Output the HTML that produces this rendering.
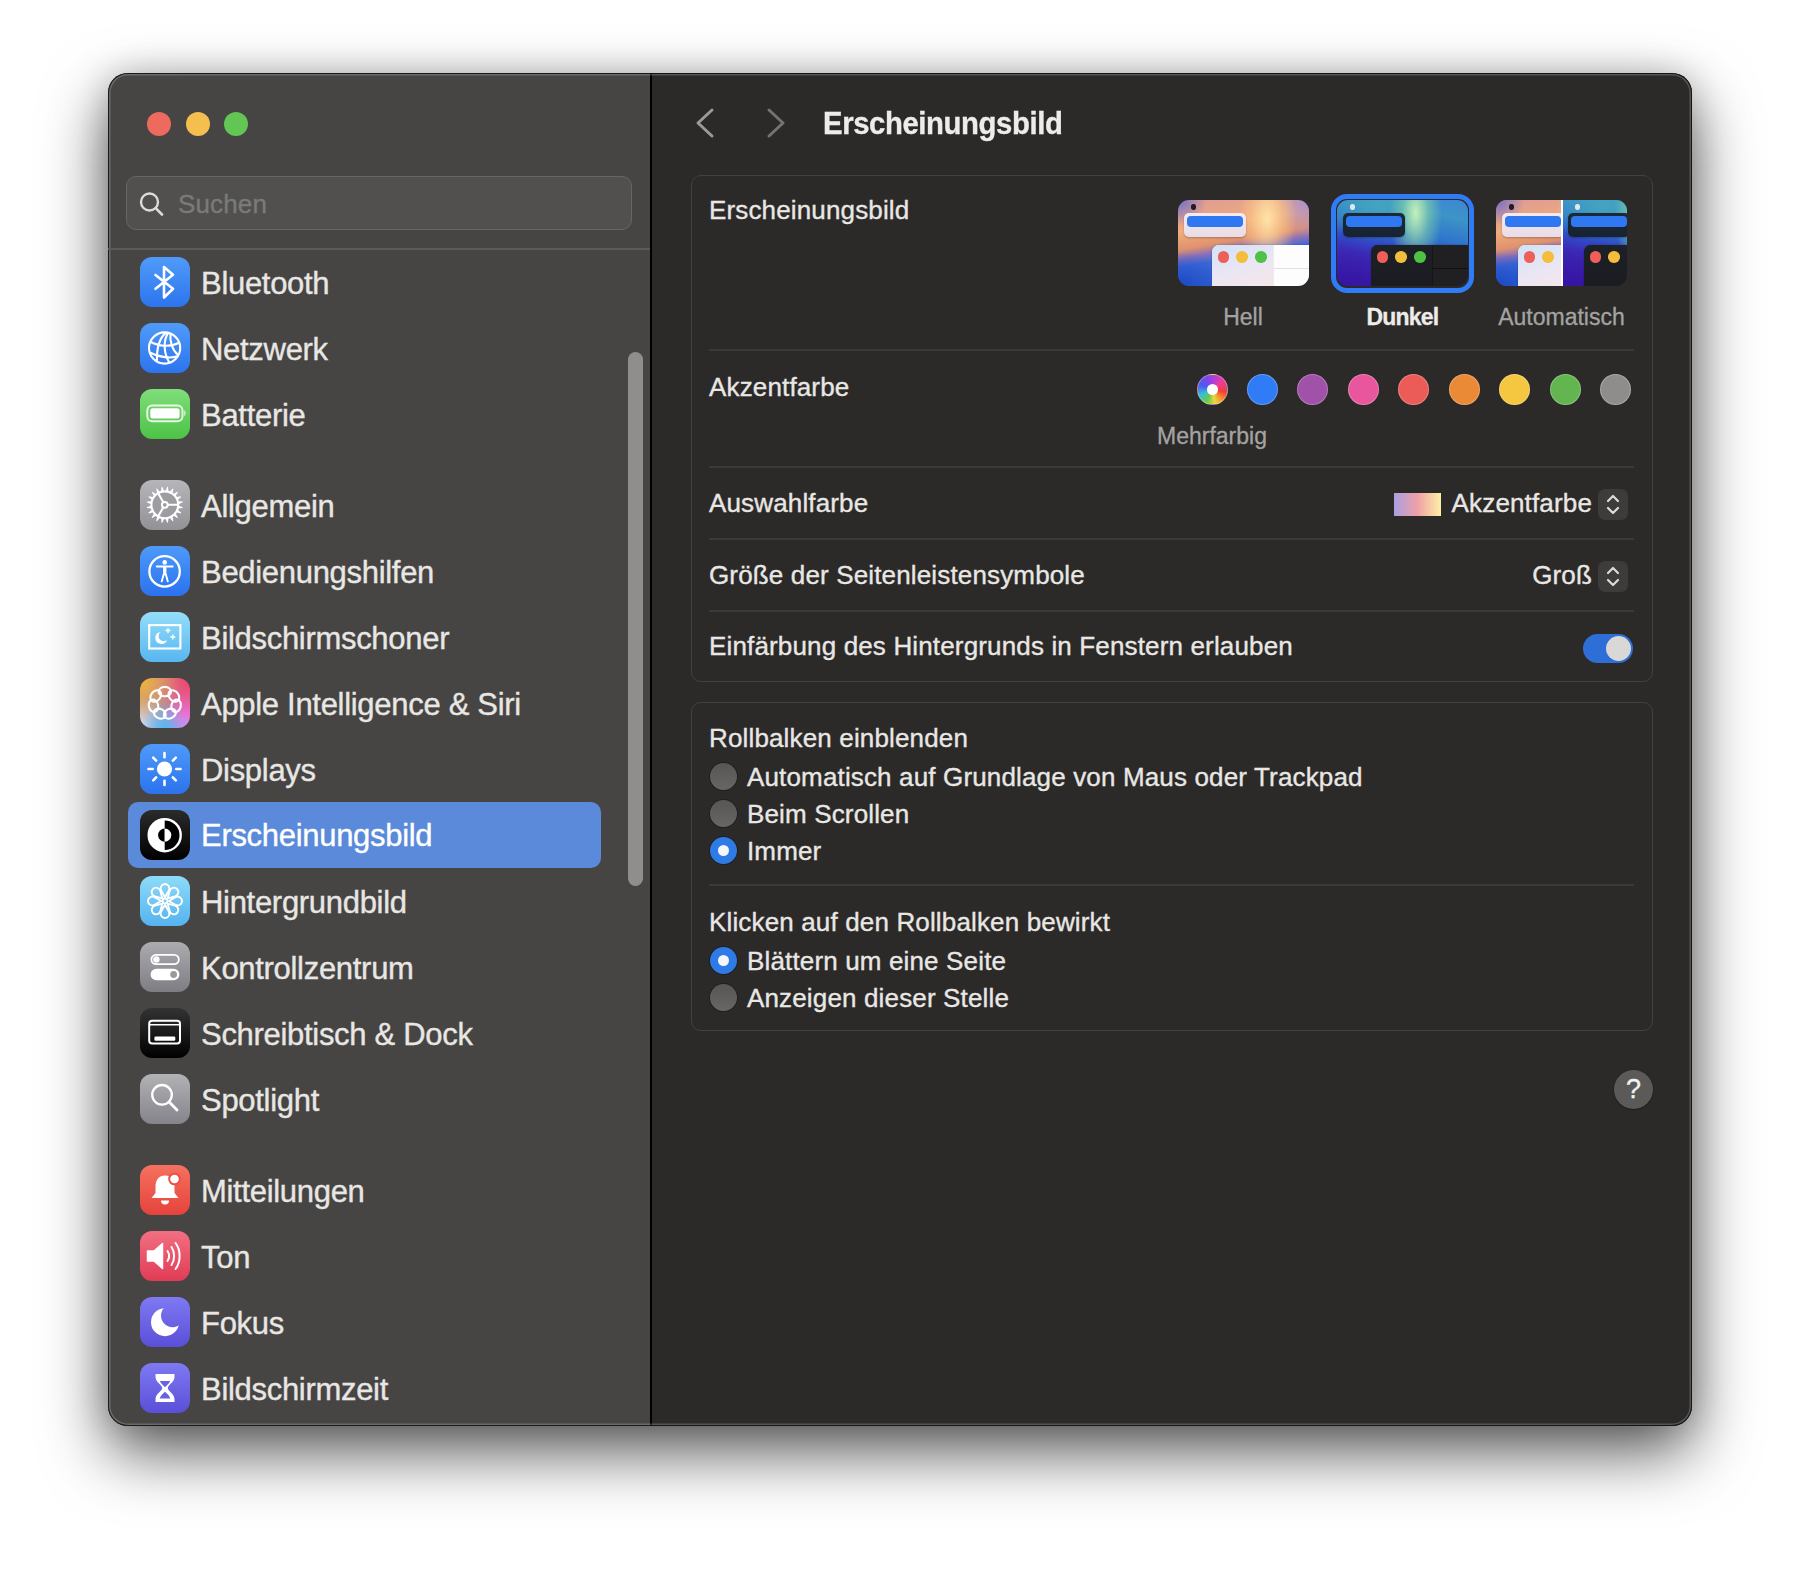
<!DOCTYPE html>
<html><head><meta charset="utf-8">
<style>
html,body{margin:0;padding:0;background:#fff;width:1800px;height:1569px;overflow:hidden;font-family:"Liberation Sans",sans-serif;}
.abs{position:absolute;}
#win{position:absolute;left:108px;top:73px;width:1584px;height:1353px;border-radius:20px;overflow:hidden;
 box-shadow:0 26px 64px rgba(0,0,0,0.66),0 0 32px rgba(0,0,0,0.16);background:#2b2a29;}
#side{position:absolute;left:0;top:0;width:542px;height:1353px;background:#464544;}
#divider{position:absolute;left:542px;top:0;width:2px;height:1353px;background:#000;}
#content{position:absolute;left:544px;top:0;width:1040px;height:1353px;background:#2b2a29;}
#winborder{position:absolute;left:108px;top:73px;width:1584px;height:1353px;border-radius:20px;box-sizing:border-box;box-shadow:inset 0 0 0 1px rgba(0,0,0,0.75),inset 0 0 0 2.5px rgba(255,255,255,0.2);pointer-events:none;}
.t{position:absolute;white-space:nowrap;color:#e9e7e4;-webkit-text-stroke:0.35px currentColor;}
.side-t{font-size:31px;line-height:50px;height:50px;letter-spacing:-0.3px;}
.ct{font-size:26px;line-height:30px;height:30px;letter-spacing:0.15px;}
.icon{position:absolute;width:50px;height:50px;border-radius:12px;overflow:hidden;}
.icon svg{position:absolute;left:0;top:0;width:50px;height:50px;}
.card{position:absolute;box-sizing:border-box;border:1.5px solid #424140;border-radius:10px;background:#2b2a29;}
.sep{position:absolute;height:1.5px;background:#3b3a39;}
.tl{position:absolute;width:24px;height:24px;border-radius:50%;}
.sw{position:absolute;width:31px;height:31px;border-radius:50%;box-sizing:border-box;}
.radio{position:absolute;width:27px;height:27px;border-radius:50%;box-sizing:border-box;}
.radio.off{background:linear-gradient(#575655,#676665);box-shadow:0 0 0 1px rgba(0,0,0,0.25);}
.radio.on{background:#2f7be6;box-shadow:0 0 0 1px rgba(0,0,0,0.25);}
.radio.on::after{content:"";position:absolute;left:8px;top:8px;width:11px;height:11px;border-radius:50%;background:#f4f6fa;}
.step{position:absolute;width:30px;height:31px;border-radius:7px;background:#3d3c3b;}
.step svg{position:absolute;left:0;top:0;}
.lbl{position:absolute;white-space:nowrap;font-size:23px;line-height:30px;height:30px;color:#a4a3a1;text-align:center;-webkit-text-stroke:0.3px currentColor;}
</style></head><body>
<div id="win">
  <div id="side"></div>
  <div id="divider"></div>
  <div id="content"></div>
</div>
<div id="winborder"></div>

<!-- traffic lights -->
<div class="tl" style="left:147px;top:112px;background:#ee6a5e;"></div>
<div class="tl" style="left:186px;top:112px;background:#f5bf4f;"></div>
<div class="tl" style="left:224px;top:112px;background:#62c554;"></div>

<!-- search -->
<div class="abs" style="left:126px;top:176px;width:506px;height:54px;box-sizing:border-box;border:1.5px solid #676665;border-radius:10px;background:#51504f;"></div>
<svg class="abs" style="left:136px;top:188px" width="32" height="32" viewBox="0 0 32 32"><circle cx="13.5" cy="14" r="8.5" fill="none" stroke="#dcdbd9" stroke-width="2.4"/><line x1="19.7" y1="20.2" x2="26" y2="26.5" stroke="#dcdbd9" stroke-width="2.6" stroke-linecap="round"/></svg>
<div class="t ct" style="left:178px;top:189px;color:#7b7a79;">Suchen</div>
<div class="abs" style="left:108px;top:248px;width:542px;height:2px;background:#5c5b5a;"></div>

<!-- scrollbar -->
<div class="abs" style="left:628px;top:352px;width:15px;height:534px;border-radius:8px;background:#8f8e8d;"></div>

<!-- selection highlight -->
<div class="abs" style="left:128px;top:802px;width:473px;height:66px;border-radius:10px;background:#5a8ad9;"></div>

<div class="icon ic-bt" style="left:140px;top:257px;background:linear-gradient(#509bf9,#2c74ee);"><svg viewBox="0 0 50 50"><path d="M15.5,18 L33,31.8 L24,40.5 L24,10 L33,17.8 L15.5,31.8" fill="none" stroke="#fff" stroke-width="2.6" stroke-linejoin="round" stroke-linecap="round"/></svg></div>
<div class="t side-t" style="left:201px;top:258.5px;">Bluetooth</div>
<div class="icon ic-net" style="left:140px;top:323px;background:linear-gradient(#509bf9,#2c74ee);"><svg viewBox="0 0 50 50"><g fill="none" stroke="#fff" stroke-width="2.1"><circle cx="24.6" cy="25" r="15.6"/><path d="M26,9.6 C19.5,15 16.5,26 17,39"/><path d="M28.3,9.7 C23.5,17 23,29 29.5,39.8"/><path d="M30.5,10.4 C29.5,18 32,27 38.5,32.5"/><path d="M10.3,18.5 C18,23.5 30,24.5 39.5,19.5"/><path d="M9.7,29.5 C19,34.5 31,35.5 37.5,33.3"/></g></svg></div>
<div class="t side-t" style="left:201px;top:324.5px;">Netzwerk</div>
<div class="icon ic-bat" style="left:140px;top:389px;background:linear-gradient(#80de7a,#4cc346);"><svg viewBox="0 0 50 50"><rect x="7.3" y="16.4" width="35.2" height="15.8" rx="5" fill="none" stroke="rgba(255,255,255,0.85)" stroke-width="2"/><rect x="10.3" y="19.2" width="29.3" height="10.3" rx="2.6" fill="#fff"/><path d="M44.3,21.3 C46,22 46,26.5 44.3,27.3 Z" fill="rgba(255,255,255,0.85)"/></svg></div>
<div class="t side-t" style="left:201px;top:390.5px;">Batterie</div>
<div class="icon ic-gen" style="left:140px;top:480px;background:linear-gradient(#b6b5ba,#929196);"><svg viewBox="0 0 50 50"><polygon points="25.70,10.43 27.25,6.77 28.04,6.89 28.38,10.85 30.10,11.41 32.70,8.41 33.42,8.77 32.52,12.64 33.98,13.70 37.38,11.65 37.95,12.22 35.90,15.62 36.96,17.08 40.83,16.18 41.19,16.90 38.19,19.50 38.75,21.22 42.71,21.56 42.83,22.35 39.17,23.90 39.17,25.70 42.83,27.25 42.71,28.04 38.75,28.38 38.19,30.10 41.19,32.70 40.83,33.42 36.96,32.52 35.90,33.98 37.95,37.38 37.38,37.95 33.98,35.90 32.52,36.96 33.42,40.83 32.70,41.19 30.10,38.19 28.38,38.75 28.04,42.71 27.25,42.83 25.70,39.17 23.90,39.17 22.35,42.83 21.56,42.71 21.22,38.75 19.50,38.19 16.90,41.19 16.18,40.83 17.08,36.96 15.62,35.90 12.22,37.95 11.65,37.38 13.70,33.98 12.64,32.52 8.77,33.42 8.41,32.70 11.41,30.10 10.85,28.38 6.89,28.04 6.77,27.25 10.43,25.70 10.43,23.90 6.77,22.35 6.89,21.56 10.85,21.22 11.41,19.50 8.41,16.90 8.77,16.18 12.64,17.08 13.70,15.62 11.65,12.22 12.22,11.65 15.62,13.70 17.08,12.64 16.18,8.77 16.90,8.41 19.50,11.41 21.22,10.85 21.56,6.89 22.35,6.77 23.90,10.43" fill="#fff"/><circle cx="24.8" cy="24.8" r="12.4" fill="#9d9ca1"/><line x1="27.80" y1="24.80" x2="38.30" y2="24.80" stroke="#fff" stroke-width="2.1"/><line x1="23.30" y1="27.40" x2="18.05" y2="36.49" stroke="#fff" stroke-width="2.1"/><line x1="23.30" y1="22.20" x2="18.05" y2="13.11" stroke="#fff" stroke-width="2.1"/><circle cx="24.8" cy="24.8" r="2.9" fill="#9d9ca1" stroke="#fff" stroke-width="2"/></svg></div>
<div class="t side-t" style="left:201px;top:481.5px;">Allgemein</div>
<div class="icon ic-acc" style="left:140px;top:546px;background:linear-gradient(#4e9af9,#2a72ee);"><svg viewBox="0 0 50 50"><circle cx="24.6" cy="25.4" r="15.2" fill="none" stroke="#fff" stroke-width="2.3"/><circle cx="24.7" cy="16.4" r="2.3" fill="#fff"/><path d="M16.8,20.6 L32.6,20.6" stroke="#fff" stroke-width="2" stroke-linecap="round" fill="none"/><rect x="23.1" y="20.3" width="3.3" height="9" fill="#fff"/><path d="M23.6,28.5 L21.7,35.4 M25.9,28.5 L27.8,35.4" stroke="#fff" stroke-width="1.9" stroke-linecap="round" fill="none"/></svg></div>
<div class="t side-t" style="left:201px;top:547.5px;">Bedienungshilfen</div>
<div class="icon ic-scr" style="left:140px;top:612px;background:linear-gradient(#94def9,#58b6f0);"><svg viewBox="0 0 50 50"><rect x="9.2" y="13.1" width="31.2" height="23.4" fill="none" stroke="#fff" stroke-width="2.1"/><path d="M20.5,20 A6,6 0 1 0 27,28 A5,5 0 0 1 20.5,20 Z" fill="#fff"/><path d="M28,16 L28,21 M25.5,18.5 L30.5,18.5" stroke="#fff" stroke-width="1.4"/><path d="M32.8,22.5 L32.8,27.5 M30.3,25 L35.3,25" stroke="#fff" stroke-width="1.4"/></svg></div>
<div class="t side-t" style="left:201px;top:613.5px;">Bildschirmschoner</div>
<div class="icon ic-ai" style="left:140px;top:678px;background:radial-gradient(circle at 0% 5%, #f6b432 0%, rgba(246,180,50,0) 60%), radial-gradient(circle at 100% 5%, #f8416c 0%, rgba(248,65,108,0) 58%), radial-gradient(circle at 100% 65%, #ee74e6 0%, rgba(238,116,230,0) 45%), radial-gradient(circle at 50% 100%, #55b6f2 0%, rgba(85,182,242,0) 50%), radial-gradient(circle at 0% 100%, #eceef2 0%, rgba(236,238,242,0) 45%), radial-gradient(circle at 100% 100%, #c8a4fb 0%, rgba(200,164,251,0) 45%), #b08aa6;"><svg viewBox="0 0 50 50"><ellipse cx="24.8" cy="13.6" rx="6.3" ry="4.7" fill="none" stroke="#fff" stroke-width="2.1" transform="rotate(0.0 24.8 25.2)"/><ellipse cx="24.8" cy="13.6" rx="6.3" ry="4.7" fill="none" stroke="#fff" stroke-width="2.1" transform="rotate(51.4 24.8 25.2)"/><ellipse cx="24.8" cy="13.6" rx="6.3" ry="4.7" fill="none" stroke="#fff" stroke-width="2.1" transform="rotate(102.9 24.8 25.2)"/><ellipse cx="24.8" cy="13.6" rx="6.3" ry="4.7" fill="none" stroke="#fff" stroke-width="2.1" transform="rotate(154.3 24.8 25.2)"/><ellipse cx="24.8" cy="13.6" rx="6.3" ry="4.7" fill="none" stroke="#fff" stroke-width="2.1" transform="rotate(205.7 24.8 25.2)"/><ellipse cx="24.8" cy="13.6" rx="6.3" ry="4.7" fill="none" stroke="#fff" stroke-width="2.1" transform="rotate(257.1 24.8 25.2)"/><ellipse cx="24.8" cy="13.6" rx="6.3" ry="4.7" fill="none" stroke="#fff" stroke-width="2.1" transform="rotate(308.6 24.8 25.2)"/></svg></div>
<div class="t side-t" style="left:201px;top:679.5px;">Apple Intelligence &amp; Siri</div>
<div class="icon ic-disp" style="left:140px;top:744px;background:linear-gradient(#4f9af9,#2b73ee);"><svg viewBox="0 0 50 50"><circle cx="24.5" cy="25" r="7.6" fill="#fff"/><line x1="36.30" y1="25.00" x2="40.50" y2="25.00" stroke="#fff" stroke-width="2.6" stroke-linecap="round"/><line x1="32.84" y1="33.34" x2="35.81" y2="36.31" stroke="#fff" stroke-width="2.6" stroke-linecap="round"/><line x1="24.50" y1="36.80" x2="24.50" y2="41.00" stroke="#fff" stroke-width="2.6" stroke-linecap="round"/><line x1="16.16" y1="33.34" x2="13.19" y2="36.31" stroke="#fff" stroke-width="2.6" stroke-linecap="round"/><line x1="12.70" y1="25.00" x2="8.50" y2="25.00" stroke="#fff" stroke-width="2.6" stroke-linecap="round"/><line x1="16.16" y1="16.66" x2="13.19" y2="13.69" stroke="#fff" stroke-width="2.6" stroke-linecap="round"/><line x1="24.50" y1="13.20" x2="24.50" y2="9.00" stroke="#fff" stroke-width="2.6" stroke-linecap="round"/><line x1="32.84" y1="16.66" x2="35.81" y2="13.69" stroke="#fff" stroke-width="2.6" stroke-linecap="round"/></svg></div>
<div class="t side-t" style="left:201px;top:745.5px;">Displays</div>
<div class="icon ic-app" style="left:140px;top:810px;background:linear-gradient(#2b2b2b,#000);"><svg viewBox="0 0 50 50"><circle cx="24.7" cy="25.2" r="16" fill="#000" stroke="#fff" stroke-width="2.4"/><path d="M24.7,9.2 A16,16 0 0 0 24.7,41.2 Z" fill="#fff"/><path d="M24.7,18.6 A6.6,6.6 0 0 0 24.7,31.8 Z" fill="#000"/><path d="M24.7,18.6 A6.6,6.6 0 0 1 24.7,31.8 Z" fill="#fff"/></svg></div>
<div class="t side-t" style="left:201px;top:811px;color:#fff;">Erscheinungsbild</div>
<div class="icon ic-wall" style="left:140px;top:876px;background:linear-gradient(#8ddbf8,#54b3ef);"><svg viewBox="0 0 50 50"><path d="M25,21.2 L28.85,14.5 A4.4,4.4 0 1 0 21.15,14.5 Z" fill="none" stroke="#fff" stroke-width="1.9" stroke-linejoin="round" transform="rotate(0 25 25)"/><path d="M25,21.2 L28.85,14.5 A4.4,4.4 0 1 0 21.15,14.5 Z" fill="none" stroke="#fff" stroke-width="1.9" stroke-linejoin="round" transform="rotate(45 25 25)"/><path d="M25,21.2 L28.85,14.5 A4.4,4.4 0 1 0 21.15,14.5 Z" fill="none" stroke="#fff" stroke-width="1.9" stroke-linejoin="round" transform="rotate(90 25 25)"/><path d="M25,21.2 L28.85,14.5 A4.4,4.4 0 1 0 21.15,14.5 Z" fill="none" stroke="#fff" stroke-width="1.9" stroke-linejoin="round" transform="rotate(135 25 25)"/><path d="M25,21.2 L28.85,14.5 A4.4,4.4 0 1 0 21.15,14.5 Z" fill="none" stroke="#fff" stroke-width="1.9" stroke-linejoin="round" transform="rotate(180 25 25)"/><path d="M25,21.2 L28.85,14.5 A4.4,4.4 0 1 0 21.15,14.5 Z" fill="none" stroke="#fff" stroke-width="1.9" stroke-linejoin="round" transform="rotate(225 25 25)"/><path d="M25,21.2 L28.85,14.5 A4.4,4.4 0 1 0 21.15,14.5 Z" fill="none" stroke="#fff" stroke-width="1.9" stroke-linejoin="round" transform="rotate(270 25 25)"/><path d="M25,21.2 L28.85,14.5 A4.4,4.4 0 1 0 21.15,14.5 Z" fill="none" stroke="#fff" stroke-width="1.9" stroke-linejoin="round" transform="rotate(315 25 25)"/><circle cx="25" cy="25" r="2.3" fill="none" stroke="#fff" stroke-width="1.8"/></svg></div>
<div class="t side-t" style="left:201px;top:877.5px;">Hintergrundbild</div>
<div class="icon ic-cc" style="left:140px;top:942px;background:linear-gradient(#ababb0,#7e7d83);"><svg viewBox="0 0 50 50"><rect x="11.4" y="12.8" width="27.4" height="9.4" rx="4.7" fill="none" stroke="#fff" stroke-width="1.8"/><circle cx="16.4" cy="17.5" r="3.2" fill="#fff"/><rect x="10.6" y="26.8" width="28.8" height="11.4" rx="5.7" fill="#fff"/><circle cx="33.6" cy="32.5" r="3.4" fill="#9a999e"/></svg></div>
<div class="t side-t" style="left:201px;top:943.5px;">Kontrollzentrum</div>
<div class="icon ic-dock" style="left:140px;top:1008px;background:linear-gradient(#333,#000);"><svg viewBox="0 0 50 50"><rect x="9.2" y="12.8" width="30.8" height="22.6" rx="3" fill="none" stroke="#fff" stroke-width="2"/><line x1="9.2" y1="16.8" x2="40" y2="16.8" stroke="#fff" stroke-width="1.6"/><rect x="14.4" y="28.6" width="20.9" height="4.2" rx="1.2" fill="#fff"/></svg></div>
<div class="t side-t" style="left:201px;top:1009.5px;">Schreibtisch &amp; Dock</div>
<div class="icon ic-spot" style="left:140px;top:1074px;background:linear-gradient(#b2b1b6,#85848a);"><svg viewBox="0 0 50 50"><circle cx="22" cy="20.8" r="9.8" fill="none" stroke="#fff" stroke-width="2.3"/><line x1="29.2" y1="28" x2="37" y2="36" stroke="#fff" stroke-width="2.8" stroke-linecap="round"/></svg></div>
<div class="t side-t" style="left:201px;top:1075.5px;">Spotlight</div>
<div class="icon ic-notif" style="left:140px;top:1165px;background:linear-gradient(#f5715f,#e5433b);"><svg viewBox="0 0 50 50"><path d="M25,10.5 C18,10.5 15.5,16 15.5,22 L15.5,28 L11.5,33 L38.5,33 L34.5,28 L34.5,22 C34.5,16 32,10.5 25,10.5 Z" fill="#fff"/><path d="M21,35.5 A4,4 0 0 0 29,35.5 Z" fill="#fff"/><circle cx="34.5" cy="14" r="6.3" fill="#ea5246"/><circle cx="34.5" cy="14" r="4.3" fill="#fff"/></svg></div>
<div class="t side-t" style="left:201px;top:1166.5px;">Mitteilungen</div>
<div class="icon ic-sound" style="left:140px;top:1231px;background:linear-gradient(#f26f82,#e03c55);"><svg viewBox="0 0 50 50"><path d="M7.5,20 L14,20 L22.5,12.5 L22.5,37.5 L14,30 L7.5,30 Z" fill="#fff" stroke="#fff" stroke-width="1.5" stroke-linejoin="round"/><path d="M27.5,20 C29.5,23 29.5,27 27.5,30" fill="none" stroke="#fff" stroke-width="2" stroke-linecap="round"/><path d="M31.5,16 C35,21 35,29 31.5,34" fill="none" stroke="#fff" stroke-width="2" stroke-linecap="round"/><path d="M35.5,12 C41,19 41,31 35.5,38" fill="none" stroke="#fff" stroke-width="2" stroke-linecap="round"/></svg></div>
<div class="t side-t" style="left:201px;top:1232.5px;">Ton</div>
<div class="icon ic-focus" style="left:140px;top:1297px;background:linear-gradient(#7f79f2,#5a4fd8);"><svg viewBox="0 0 50 50"><defs><mask id="moonm"><rect width="50" height="50" fill="#fff"/><circle cx="32.6" cy="18.6" r="11.6" fill="#000"/></mask></defs><circle cx="25" cy="25.2" r="14" fill="#fff" mask="url(#moonm)"/></svg></div>
<div class="t side-t" style="left:201px;top:1298.5px;">Fokus</div>
<div class="icon ic-time" style="left:140px;top:1363px;background:linear-gradient(#7f79f2,#5a4fd8);"><svg viewBox="0 0 50 50"><path d="M15.5,11 L34.5,11 L34.5,14 C34.5,19 27.8,22 27.8,25 C27.8,28 34.5,31 34.5,36 L34.5,39 L15.5,39 L15.5,36 C15.5,31 22.2,28 22.2,25 C22.2,22 15.5,19 15.5,14 Z" fill="#fff"/><path d="M19.8,18 L30.2,18 C29,20.8 26.5,22.8 25,24.2 C23.5,22.8 21,20.8 19.8,18 Z" fill="#6a62e2"/><path d="M25,28.8 C23,30.6 20.3,33 19.6,35.6 L30.4,35.6 C29.7,33 27,30.6 25,28.8 Z" fill="#6a62e2"/></svg></div>
<div class="t side-t" style="left:201px;top:1364.5px;">Bildschirmzeit</div>

<!-- title bar -->
<svg class="abs" style="left:690px;top:102px" width="30" height="42" viewBox="0 0 30 42"><polyline points="22,8 8,21 22,34" fill="none" stroke="#9b9a98" stroke-width="3" stroke-linecap="round" stroke-linejoin="round"/></svg>
<svg class="abs" style="left:761px;top:102px" width="30" height="42" viewBox="0 0 30 42"><polyline points="8,8 22,21 8,34" fill="none" stroke="#747372" stroke-width="3" stroke-linecap="round" stroke-linejoin="round"/></svg>
<div class="t" style="left:823px;top:104px;font-size:31px;line-height:40px;font-weight:bold;letter-spacing:-0.4px;transform:scaleX(0.944);transform-origin:0 0;color:#eeece9;">Erscheinungsbild</div>

<!-- card 1 -->
<div class="card" style="left:691px;top:175px;width:962px;height:507px;"></div>
<div class="t ct" style="left:709px;top:195px;">Erscheinungsbild</div>
<div class="sep" style="left:709px;top:349px;width:925px;"></div>
<div class="t ct" style="left:709px;top:372px;">Akzentfarbe</div>
<div class="sep" style="left:709px;top:466px;width:925px;"></div>
<div class="t ct" style="left:709px;top:488px;">Auswahlfarbe</div>
<div class="sep" style="left:709px;top:538px;width:925px;"></div>
<div class="t ct" style="left:709px;top:560px;">Größe der Seitenleistensymbole</div>
<div class="sep" style="left:709px;top:610px;width:925px;"></div>
<div class="t ct" style="left:709px;top:631px;">Einfärbung des Hintergrunds in Fenstern erlauben</div>

<!-- thumbnails -->
<!--THUMBS--><div class="abs" style="left:1178px;top:200px;width:131px;height:86px;border-radius:11px;overflow:hidden;background:radial-gradient(ellipse 22% 65% at 68% 22%, rgba(255,230,170,0.95), rgba(255,205,140,0.5) 55%, rgba(255,200,140,0) 100%), radial-gradient(ellipse 28% 45% at 100% 0%, rgba(165,140,215,0.95), rgba(165,140,215,0) 100%), radial-gradient(ellipse 22% 30% at 0% 0%, rgba(105,110,205,0.95), rgba(105,110,205,0) 100%), radial-gradient(ellipse 40% 40% at 0% 100%, rgba(25,70,195,0.9), rgba(25,70,195,0) 100%), linear-gradient(170deg, #dd9a96 0%, #efac7c 30%, #e0926e 46%, #8a70b8 54%, #3d6ad8 62%, #2b5ed2 100%);">
<div class="abs" style="left:13px;top:4px;width:5px;height:6px;border-radius:45%;background:#111;opacity:0.9"></div>
<div class="abs" style="left:6px;top:13px;width:62px;height:24px;border-radius:5px;background:linear-gradient(#f4eaf0,#e8dce6);box-shadow:0 1px 2px rgba(0,0,0,0.25);"></div>
<div class="abs" style="left:9px;top:16px;width:56px;height:11px;border-radius:4px;background:#2f78f2;"></div>
<div class="abs" style="left:34px;top:45px;width:97px;height:41px;border-top-left-radius:7px;overflow:hidden;background:#fdfdfd;box-shadow:0 0 2px rgba(0,0,0,0.3);">
  <div class="abs" style="left:0;top:0;width:61px;height:41px;background:linear-gradient(160deg,#cfe2f8 0%,#e9e6f4 50%,#f7e6ea 100%);"></div>
  <div class="abs" style="left:61px;top:23px;width:36px;height:1px;background:#e2e2e2;"></div>
  <div class="abs" style="left:61px;top:0;width:1px;height:41px;background:#e2e2e2;opacity:0.6"></div>
  <div class="abs" style="left:5.5px;top:6px;width:11.5px;height:11.5px;border-radius:50%;background:#ed5f57;"></div>
  <div class="abs" style="left:24px;top:6px;width:11.5px;height:11.5px;border-radius:50%;background:#f4bd3c;"></div>
  <div class="abs" style="left:43px;top:6px;width:11.5px;height:11.5px;border-radius:50%;background:#4fc245;"></div>
</div>
</div>
<div class="abs" style="left:1331px;top:194px;width:143px;height:99px;box-sizing:border-box;border-radius:16px;border:5px solid #2f7cf6;"></div>
<div class="abs" style="left:1337px;top:200px;width:131px;height:86px;border-radius:11px;overflow:hidden;background:radial-gradient(ellipse 20% 70% at 60% 15%, rgba(205,245,185,0.95), rgba(130,210,170,0.6) 50%, rgba(80,170,170,0) 100%), radial-gradient(ellipse 45% 40% at 30% 8%, rgba(70,170,190,0.8), rgba(70,170,190,0) 100%), radial-gradient(ellipse 60% 45% at 0% 100%, rgba(55,20,165,0.95), rgba(60,25,170,0.5) 60%, rgba(60,25,170,0) 100%), linear-gradient(192deg, #3c86d6 0%, #3d94c6 18%, #2f74cc 40%, #2f52c8 52%, #3a2cb8 66%, #3520a8 85%, #2a1490 100%);">
<div class="abs" style="left:13px;top:4px;width:5px;height:6px;border-radius:45%;background:#f0f0f0;opacity:0.9"></div>
<div class="abs" style="left:6px;top:13px;width:62px;height:24px;border-radius:5px;background:linear-gradient(#1c2a36,#172330);box-shadow:0 1px 2px rgba(0,0,0,0.25);"></div>
<div class="abs" style="left:9px;top:16px;width:56px;height:11px;border-radius:4px;background:#2f78f2;"></div>
<div class="abs" style="left:34px;top:45px;width:97px;height:41px;border-top-left-radius:7px;overflow:hidden;background:#202022;box-shadow:0 0 2px rgba(0,0,0,0.3);">
  <div class="abs" style="left:0;top:0;width:61px;height:41px;background:linear-gradient(#1d2024,#1a1c22);"></div>
  <div class="abs" style="left:61px;top:23px;width:36px;height:1px;background:#111;"></div>
  <div class="abs" style="left:61px;top:0;width:1px;height:41px;background:#111;opacity:0.6"></div>
  <div class="abs" style="left:5.5px;top:6px;width:11.5px;height:11.5px;border-radius:50%;background:#ed5f57;"></div>
  <div class="abs" style="left:24px;top:6px;width:11.5px;height:11.5px;border-radius:50%;background:#f4bd3c;"></div>
  <div class="abs" style="left:43px;top:6px;width:11.5px;height:11.5px;border-radius:50%;background:#4fc245;"></div>
</div>
</div>
<div class="abs" style="left:1496px;top:200px;width:131px;height:86px;border-radius:11px;overflow:hidden;">
<div class="abs" style="left:0;top:0;width:65px;height:86px;overflow:hidden;"><div class="abs" style="left:0px;top:0px;width:131px;height:86px;overflow:hidden;background:radial-gradient(ellipse 22% 65% at 68% 22%, rgba(255,230,170,0.95), rgba(255,205,140,0.5) 55%, rgba(255,200,140,0) 100%), radial-gradient(ellipse 28% 45% at 100% 0%, rgba(165,140,215,0.95), rgba(165,140,215,0) 100%), radial-gradient(ellipse 22% 30% at 0% 0%, rgba(105,110,205,0.95), rgba(105,110,205,0) 100%), radial-gradient(ellipse 40% 40% at 0% 100%, rgba(25,70,195,0.9), rgba(25,70,195,0) 100%), linear-gradient(170deg, #dd9a96 0%, #efac7c 30%, #e0926e 46%, #8a70b8 54%, #3d6ad8 62%, #2b5ed2 100%);">
<div class="abs" style="left:13px;top:4px;width:5px;height:6px;border-radius:45%;background:#111;opacity:0.9"></div>
<div class="abs" style="left:6px;top:13px;width:62px;height:24px;border-radius:5px;background:linear-gradient(#f4eaf0,#e8dce6);box-shadow:0 1px 2px rgba(0,0,0,0.25);"></div>
<div class="abs" style="left:9px;top:16px;width:56px;height:11px;border-radius:4px;background:#2f78f2;"></div>
<div class="abs" style="left:22px;top:45px;width:97px;height:41px;border-top-left-radius:7px;overflow:hidden;background:#fdfdfd;box-shadow:0 0 2px rgba(0,0,0,0.3);">
  <div class="abs" style="left:0;top:0;width:61px;height:41px;background:linear-gradient(160deg,#cfe2f8 0%,#e9e6f4 50%,#f7e6ea 100%);"></div>
  <div class="abs" style="left:61px;top:23px;width:36px;height:1px;background:#e2e2e2;"></div>
  <div class="abs" style="left:61px;top:0;width:1px;height:41px;background:#e2e2e2;opacity:0.6"></div>
  <div class="abs" style="left:5.5px;top:6px;width:11.5px;height:11.5px;border-radius:50%;background:#ed5f57;"></div>
  <div class="abs" style="left:24px;top:6px;width:11.5px;height:11.5px;border-radius:50%;background:#f4bd3c;"></div>
  <div class="abs" style="left:43px;top:6px;width:11.5px;height:11.5px;border-radius:50%;background:#4fc245;"></div>
</div>
</div></div>
<div class="abs" style="left:66px;top:0;width:65px;height:86px;overflow:hidden;"><div class="abs" style="left:0px;top:0px;width:131px;height:86px;overflow:hidden;background:radial-gradient(ellipse 20% 70% at 60% 15%, rgba(205,245,185,0.95), rgba(130,210,170,0.6) 50%, rgba(80,170,170,0) 100%), radial-gradient(ellipse 45% 40% at 30% 8%, rgba(70,170,190,0.8), rgba(70,170,190,0) 100%), radial-gradient(ellipse 60% 45% at 0% 100%, rgba(55,20,165,0.95), rgba(60,25,170,0.5) 60%, rgba(60,25,170,0) 100%), linear-gradient(192deg, #3c86d6 0%, #3d94c6 18%, #2f74cc 40%, #2f52c8 52%, #3a2cb8 66%, #3520a8 85%, #2a1490 100%);">
<div class="abs" style="left:13px;top:4px;width:5px;height:6px;border-radius:45%;background:#f0f0f0;opacity:0.9"></div>
<div class="abs" style="left:6px;top:13px;width:62px;height:24px;border-radius:5px;background:linear-gradient(#1c2a36,#172330);box-shadow:0 1px 2px rgba(0,0,0,0.25);"></div>
<div class="abs" style="left:9px;top:16px;width:56px;height:11px;border-radius:4px;background:#2f78f2;"></div>
<div class="abs" style="left:22px;top:45px;width:97px;height:41px;border-top-left-radius:7px;overflow:hidden;background:#202022;box-shadow:0 0 2px rgba(0,0,0,0.3);">
  <div class="abs" style="left:0;top:0;width:61px;height:41px;background:linear-gradient(#1d2024,#1a1c22);"></div>
  <div class="abs" style="left:61px;top:23px;width:36px;height:1px;background:#111;"></div>
  <div class="abs" style="left:61px;top:0;width:1px;height:41px;background:#111;opacity:0.6"></div>
  <div class="abs" style="left:5.5px;top:6px;width:11.5px;height:11.5px;border-radius:50%;background:#ed5f57;"></div>
  <div class="abs" style="left:24px;top:6px;width:11.5px;height:11.5px;border-radius:50%;background:#f4bd3c;"></div>
  <div class="abs" style="left:43px;top:6px;width:11.5px;height:11.5px;border-radius:50%;background:#4fc245;"></div>
</div>
</div></div>
<div class="abs" style="left:64.5px;top:0;width:2px;height:86px;background:#fff;"></div>
</div><!--/THUMBS-->
<div class="lbl" style="left:1178px;top:302px;width:130px;">Hell</div>
<div class="lbl" style="left:1337px;top:302px;width:131px;font-weight:bold;color:#eeece9;letter-spacing:-0.8px;">Dunkel</div>
<div class="lbl" style="left:1491px;top:302px;width:141px;">Automatisch</div>

<!-- accent swatches -->
<div class="sw" style="left:1197px;top:374px;background:conic-gradient(from 0deg,#a83ee0,#e83e9a 50deg,#f43c3c 100deg,#f59a2a 140deg,#e8d840 170deg,#6cc848 205deg,#38c0d8 245deg,#4a5cf0 290deg,#7a48e8 330deg,#a83ee0 360deg);border:1.5px solid rgba(255,255,255,0.3);"></div>
<div class="abs" style="left:1207px;top:384px;width:11px;height:11px;border-radius:50%;background:#fff;"></div>
<div class="sw" style="left:1247px;top:374px;background:#2f7cf6;border:1.5px solid rgba(255,255,255,0.25);"></div>
<div class="sw" style="left:1297px;top:374px;background:#a051a8;border:1.5px solid rgba(255,255,255,0.25);"></div>
<div class="sw" style="left:1348px;top:374px;background:#e8579d;border:1.5px solid rgba(255,255,255,0.25);"></div>
<div class="sw" style="left:1398px;top:374px;background:#eb5b58;border:1.5px solid rgba(255,255,255,0.25);"></div>
<div class="sw" style="left:1449px;top:374px;background:#ea8a36;border:1.5px solid rgba(255,255,255,0.25);"></div>
<div class="sw" style="left:1499px;top:374px;background:#f5c640;border:1.5px solid rgba(255,255,255,0.25);"></div>
<div class="sw" style="left:1550px;top:374px;background:#62b54f;border:1.5px solid rgba(255,255,255,0.25);"></div>
<div class="sw" style="left:1600px;top:374px;background:#8e8d8c;border:1.5px solid rgba(255,255,255,0.25);"></div>
<div class="lbl" style="left:1152px;top:421px;width:120px;">Mehrfarbig</div>

<!-- Auswahlfarbe popup -->
<div class="abs" style="left:1394px;top:493px;width:47px;height:23px;background:linear-gradient(90deg,#a89fe2,#f0a0a6 50%,#fdf0a6);"></div>
<div class="t ct" style="right:208px;top:488px;">Akzentfarbe</div>
<div class="step" style="left:1598px;top:489px;"><svg width="30" height="31" viewBox="0 0 30 31"><polyline points="10,12 15,7 20,12" fill="none" stroke="#dedcda" stroke-width="2.2" stroke-linecap="round" stroke-linejoin="round"/><polyline points="10,19 15,24 20,19" fill="none" stroke="#dedcda" stroke-width="2.2" stroke-linecap="round" stroke-linejoin="round"/></svg></div>
<div class="t ct" style="right:208px;top:560px;">Groß</div>
<div class="step" style="left:1598px;top:561px;"><svg width="30" height="31" viewBox="0 0 30 31"><polyline points="10,12 15,7 20,12" fill="none" stroke="#dedcda" stroke-width="2.2" stroke-linecap="round" stroke-linejoin="round"/><polyline points="10,19 15,24 20,19" fill="none" stroke="#dedcda" stroke-width="2.2" stroke-linecap="round" stroke-linejoin="round"/></svg></div>

<!-- toggle -->
<div class="abs" style="left:1583px;top:634px;width:50px;height:29px;border-radius:15px;background:#2d6fd6;"></div>
<div class="abs" style="left:1606px;top:636px;width:25px;height:25px;border-radius:50%;background:#d9d8d6;"></div>

<!-- card 2 -->
<div class="card" style="left:691px;top:702px;width:962px;height:329px;"></div>
<div class="t ct" style="left:709px;top:723px;">Rollbalken einblenden</div>
<div class="radio off" style="left:710px;top:763px;"></div>
<div class="t ct" style="left:747px;top:762px;">Automatisch auf Grundlage von Maus oder Trackpad</div>
<div class="radio off" style="left:710px;top:800px;"></div>
<div class="t ct" style="left:747px;top:799px;">Beim Scrollen</div>
<div class="radio on" style="left:710px;top:837px;"></div>
<div class="t ct" style="left:747px;top:836px;">Immer</div>
<div class="sep" style="left:709px;top:884px;width:925px;"></div>
<div class="t ct" style="left:709px;top:907px;">Klicken auf den Rollbalken bewirkt</div>
<div class="radio on" style="left:710px;top:947px;"></div>
<div class="t ct" style="left:747px;top:946px;">Blättern um eine Seite</div>
<div class="radio off" style="left:710px;top:984px;"></div>
<div class="t ct" style="left:747px;top:983px;">Anzeigen dieser Stelle</div>

<!-- help -->
<div class="abs" style="left:1614px;top:1070px;width:39px;height:39px;border-radius:50%;background:#5b5a59;box-shadow:0 0.5px 1.5px rgba(0,0,0,0.5);"></div>
<div class="t" style="left:1614px;top:1070px;width:39px;height:39px;line-height:39px;text-align:center;font-size:27px;color:#f2f2f2;">?</div>


</body></html>
